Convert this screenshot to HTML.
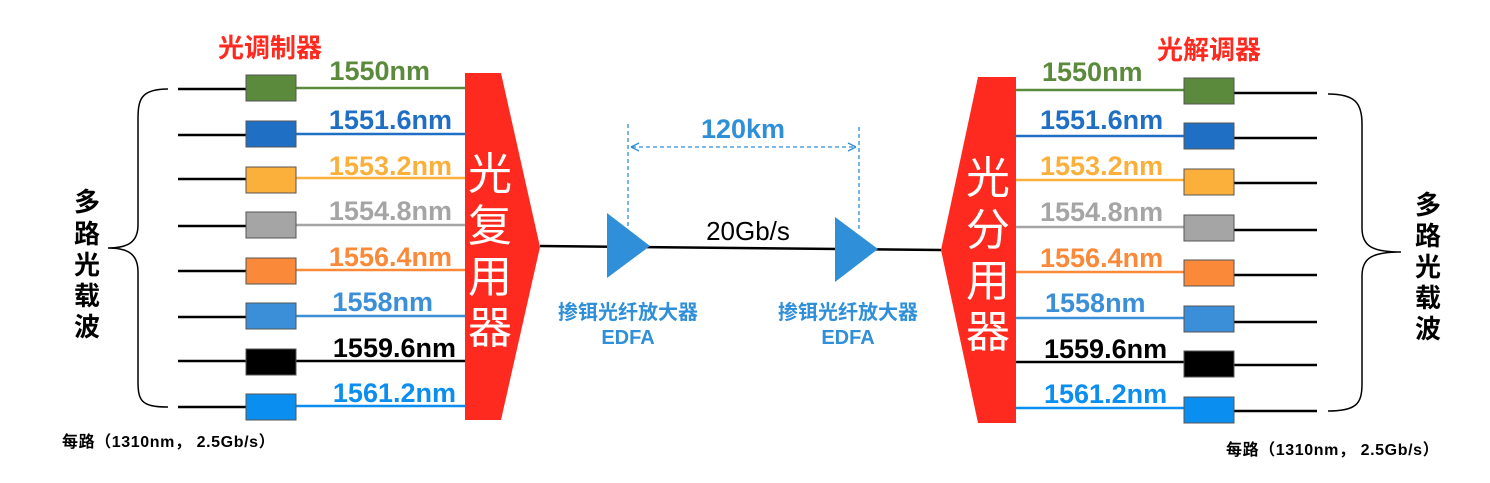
<!DOCTYPE html>
<html><head><meta charset="utf-8"><style>
html,body{margin:0;padding:0;background:#fff;}
svg{display:block;}
text{font-family:"Liberation Sans","Noto Sans CJK SC",sans-serif;}
</style></head><body>
<svg width="1490" height="483" viewBox="0 0 1490 483" xmlns="http://www.w3.org/2000/svg">
<rect width="1490" height="483" fill="#fff"/>
<text x="218" y="57" font-size="26" font-weight="bold" fill="#ff2a1f">光调制器</text>
<text x="1157" y="59" font-size="26" font-weight="bold" fill="#ff2a1f">光解调器</text>

<g stroke-width="2.5">
<line x1="178" y1="89" x2="246" y2="89" stroke="#000"/>
<line x1="178" y1="135" x2="246" y2="135" stroke="#000"/>
<line x1="178" y1="179" x2="246" y2="179" stroke="#000"/>
<line x1="178" y1="226" x2="246" y2="226" stroke="#000"/>
<line x1="178" y1="271" x2="246" y2="271" stroke="#000"/>
<line x1="178" y1="317" x2="246" y2="317" stroke="#000"/>
<line x1="178" y1="361" x2="246" y2="361" stroke="#000"/>
<line x1="178" y1="407" x2="246" y2="407" stroke="#000"/>
<line x1="296" y1="88" x2="465" y2="88" stroke="#5b8a3c"/>
<line x1="296" y1="134" x2="465" y2="134" stroke="#1f6fc5"/>
<line x1="296" y1="178" x2="465" y2="178" stroke="#fbb03b"/>
<line x1="296" y1="225" x2="465" y2="225" stroke="#a5a5a5"/>
<line x1="296" y1="270" x2="465" y2="270" stroke="#fa8a3a"/>
<line x1="296" y1="316" x2="465" y2="316" stroke="#3a8fd8"/>
<line x1="296" y1="361" x2="465" y2="361" stroke="#000"/>
<line x1="296" y1="406" x2="465" y2="406" stroke="#0a8ef0"/>
</g>
<g stroke="#555" stroke-width="1">
<rect x="246" y="75" width="50" height="26" fill="#5b8a3c"/>
<rect x="246" y="121" width="50" height="26" fill="#1f6fc5"/>
<rect x="246" y="167" width="50" height="26" fill="#fbb03b"/>
<rect x="246" y="212" width="50" height="26" fill="#a5a5a5"/>
<rect x="246" y="258" width="50" height="26" fill="#fa8a3a"/>
<rect x="246" y="303" width="50" height="26" fill="#3a8fd8"/>
<rect x="246" y="349" width="50" height="26" fill="#000"/>
<rect x="246" y="394" width="50" height="26" fill="#0a8ef0"/>
</g>
<g font-size="27" font-weight="bold" text-anchor="end">
<text x="430" y="80" fill="#5b8a3c">1550nm</text>
<text x="452" y="129" fill="#1f6fc5">1551.6nm</text>
<text x="452" y="175" fill="#fbb03b">1553.2nm</text>
<text x="452" y="220" fill="#a5a5a5">1554.8nm</text>
<text x="452" y="266" fill="#fa8a3a">1556.4nm</text>
<text x="433" y="311" fill="#3a8fd8">1558nm</text>
<text x="456" y="357" fill="#000">1559.6nm</text>
<text x="456" y="402" fill="#0a8ef0">1561.2nm</text>
</g>
<path d="M465 73 L501 73 L540 247 L501 420 L465 420 Z" fill="#ff2a1f"/>
<g font-size="44" fill="#fff" text-anchor="middle">
<text x="490" y="189">光</text>
<text x="490" y="241">复</text>
<text x="490" y="292">用</text>
<text x="490" y="343">器</text>
</g>
<path d="M168 89 C140 89 138 100 138 120 L138 225 C138 242 128 248 108 248 C128 248 138 254 138 272 L138 380 C138 400 140 407 168 407" fill="none" stroke="#000" stroke-width="1.5"/>
<g font-size="26" font-weight="bold" fill="#000" text-anchor="middle">
<text x="87" y="211">多</text>
<text x="87" y="243">路</text>
<text x="87" y="274">光</text>
<text x="87" y="305">载</text>
<text x="87" y="336">波</text>
</g>
<text x="62" y="447" font-size="16" font-weight="bold" fill="#000" letter-spacing="0.6">每路（1310nm， 2.5Gb/s）</text>

<line x1="540" y1="246" x2="941" y2="250" stroke="#000" stroke-width="2.5"/>
<path d="M607 213 L650 246 L607 278 Z" fill="#2f8fd9"/>
<path d="M835 217 L878 249 L835 282 Z" fill="#2f8fd9"/>
<g stroke="#2f8fd9" stroke-width="1.3" stroke-dasharray="4 3" fill="none">
<line x1="628" y1="124" x2="628" y2="226"/>
<line x1="859" y1="127" x2="859" y2="230"/>
<line x1="632" y1="147" x2="855" y2="147"/>
</g>
<path d="M631 147 l8 -4 M631 147 l8 4 M856 147 l-8 -4 M856 147 l-8 4" stroke="#2f8fd9" stroke-width="1.3"/>
<text x="743" y="138" font-size="27" font-weight="bold" fill="#2f8fd9" text-anchor="middle">120km</text>
<text x="748" y="240" font-size="26" fill="#000" text-anchor="middle">20Gb/s</text>
<g font-size="20" font-weight="bold" fill="#2f8fd9" text-anchor="middle">
<text x="628" y="319">掺铒光纤放大器</text>
<text x="628" y="344">EDFA</text>
<text x="848" y="319">掺铒光纤放大器</text>
<text x="848" y="344">EDFA</text>
</g>

<path d="M978 77 L1016 77 L1016 423 L978 423 L941 250 Z" fill="#ff2a1f"/>
<g font-size="44" fill="#fff" text-anchor="middle">
<text x="988" y="193">光</text>
<text x="988" y="245">分</text>
<text x="988" y="296">用</text>
<text x="988" y="347">器</text>
</g>
<g stroke-width="2.5">
<line x1="1016" y1="90" x2="1184" y2="90" stroke="#5b8a3c"/>
<line x1="1016" y1="136" x2="1184" y2="136" stroke="#1f6fc5"/>
<line x1="1016" y1="180" x2="1184" y2="180" stroke="#fbb03b"/>
<line x1="1016" y1="227" x2="1184" y2="227" stroke="#a5a5a5"/>
<line x1="1016" y1="272" x2="1184" y2="272" stroke="#fa8a3a"/>
<line x1="1016" y1="318" x2="1184" y2="318" stroke="#3a8fd8"/>
<line x1="1016" y1="362" x2="1184" y2="362" stroke="#000"/>
<line x1="1016" y1="408" x2="1184" y2="408" stroke="#0a8ef0"/>
<line x1="1234" y1="93" x2="1317" y2="93" stroke="#000"/>
<line x1="1234" y1="138" x2="1317" y2="138" stroke="#000"/>
<line x1="1234" y1="183" x2="1317" y2="183" stroke="#000"/>
<line x1="1234" y1="230" x2="1317" y2="230" stroke="#000"/>
<line x1="1234" y1="275" x2="1317" y2="275" stroke="#000"/>
<line x1="1234" y1="322" x2="1317" y2="322" stroke="#000"/>
<line x1="1234" y1="365" x2="1317" y2="365" stroke="#000"/>
<line x1="1234" y1="411" x2="1317" y2="411" stroke="#000"/>
</g>
<g stroke="#555" stroke-width="1">
<rect x="1184" y="78" width="50" height="26" fill="#5b8a3c"/>
<rect x="1184" y="123" width="50" height="26" fill="#1f6fc5"/>
<rect x="1184" y="169" width="50" height="26" fill="#fbb03b"/>
<rect x="1184" y="215" width="50" height="26" fill="#a5a5a5"/>
<rect x="1184" y="260" width="50" height="26" fill="#fa8a3a"/>
<rect x="1184" y="306" width="50" height="26" fill="#3a8fd8"/>
<rect x="1184" y="351" width="50" height="26" fill="#000"/>
<rect x="1184" y="397" width="50" height="26" fill="#0a8ef0"/>
</g>
<g font-size="27" font-weight="bold">
<text x="1042" y="81" fill="#5b8a3c">1550nm</text>
<text x="1040" y="129" fill="#1f6fc5">1551.6nm</text>
<text x="1040" y="175" fill="#fbb03b">1553.2nm</text>
<text x="1040" y="221" fill="#a5a5a5">1554.8nm</text>
<text x="1040" y="267" fill="#fa8a3a">1556.4nm</text>
<text x="1045" y="312" fill="#3a8fd8">1558nm</text>
<text x="1044" y="358" fill="#000">1559.6nm</text>
<text x="1044" y="403" fill="#0a8ef0">1561.2nm</text>
</g>
<path d="M1328 94 C1356 94 1362 104 1362 124 L1362 228 C1362 246 1372 252 1401 252 C1372 252 1362 258 1362 276 L1362 384 C1362 404 1356 411 1328 411" fill="none" stroke="#000" stroke-width="1.5"/>
<g font-size="26" font-weight="bold" fill="#000" text-anchor="middle">
<text x="1428" y="214">多</text>
<text x="1428" y="245">路</text>
<text x="1428" y="276">光</text>
<text x="1428" y="307">载</text>
<text x="1428" y="338">波</text>
</g>
<text x="1226" y="455" font-size="16" font-weight="bold" fill="#000" letter-spacing="0.6">每路（1310nm， 2.5Gb/s）</text>
</svg>
</body></html>
